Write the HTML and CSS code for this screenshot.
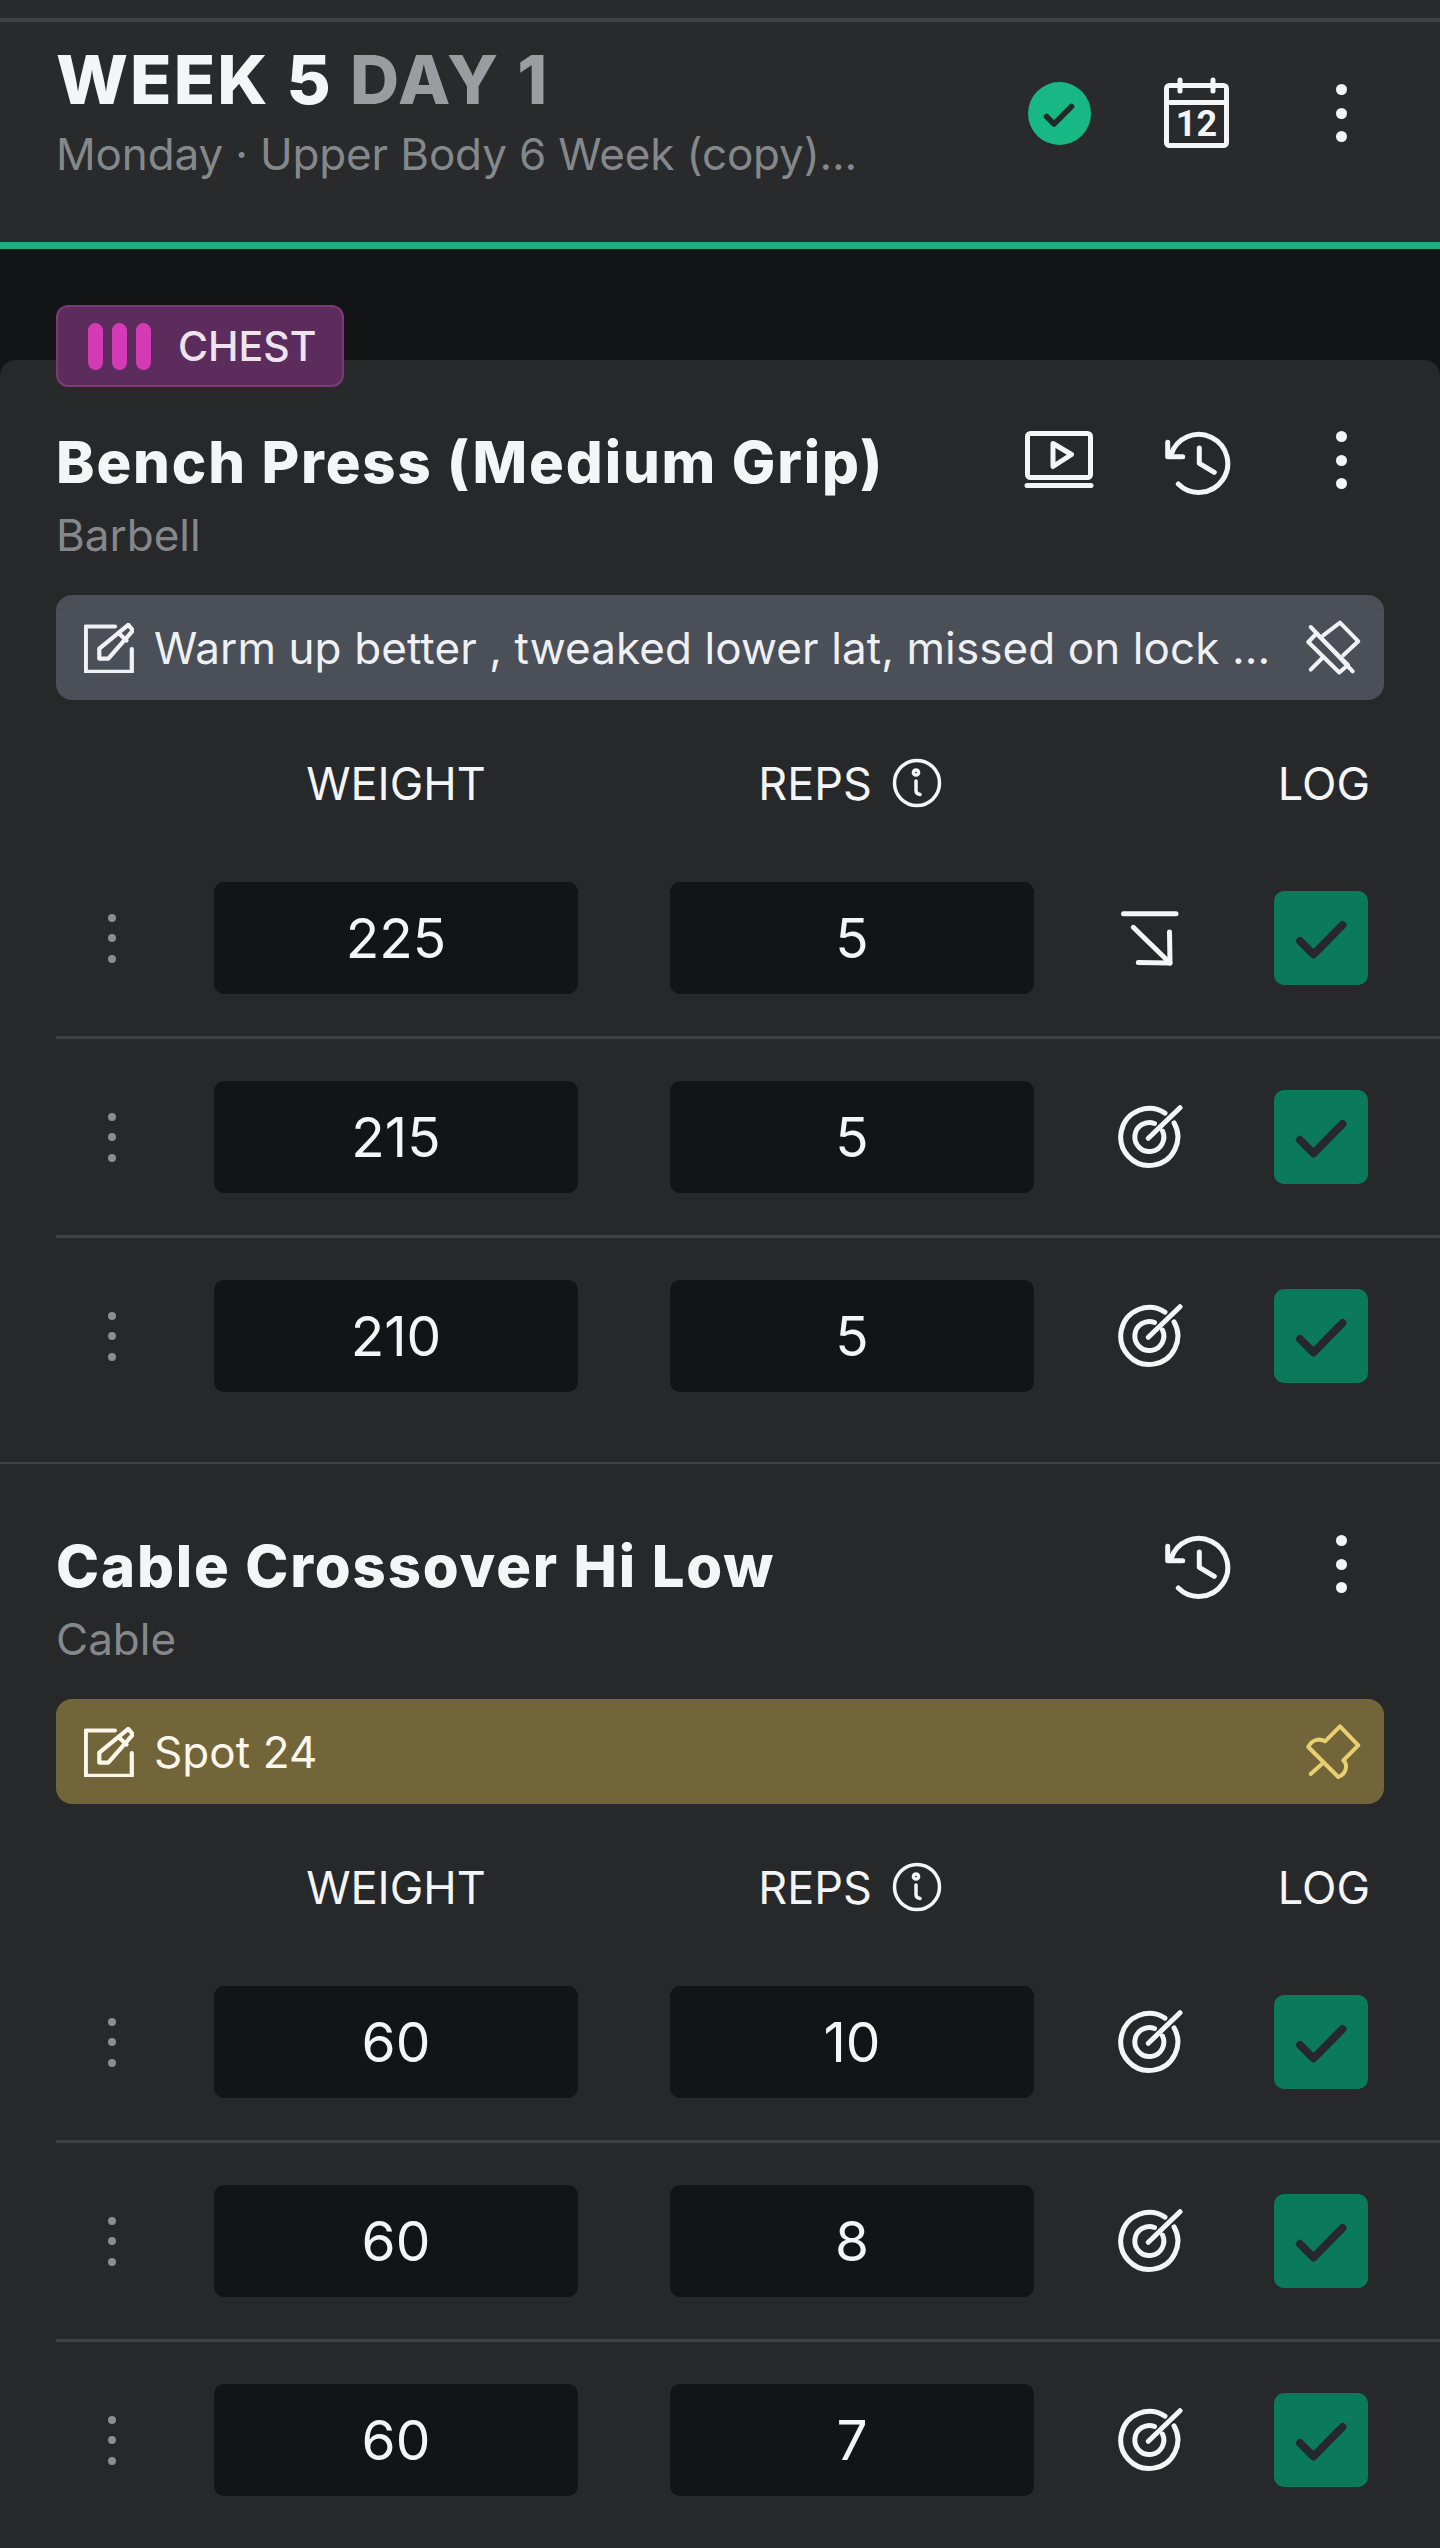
FILE: index.html

```html
<!doctype html>
<html>
<head>
<meta charset="utf-8">
<title>Workout</title>
<link rel="stylesheet" href="styles.css">
</head>

<body>
    <svg class="defs" width="0" height="0">
        <symbol id="i-edit" viewBox="0 0 50 50">
            <path d="M31 3.5H1.8V48.8H47.8V26"/>
            <path d="M15.3 35.7V25.7L44.3 1.8L49 7.5L24.3 35.7Z"/>
            <path d="M34.5 10L42.5 17.5"/>
        </symbol>
        <symbol id="i-unpin" viewBox="0 0 56 56">
            <path d="M4.7 7L46.7 51.3"/>
            <path d="M17.3 15.3L34 2.7L52.3 21.3L37.3 35.3"/>
            <path d="M2.3 22L10.5 13.5L42 45L33.3 52.5Z"/>
            <path d="M4.7 49.7L17.3 37"/>
        </symbol>
        <symbol id="i-pin" viewBox="0 0 56 56">
            <path d="M34 2.3L52.3 21.3L37.3 36.3C41.5 40 41.5 49 32.3 53L2.3 23C6 15.5 13 14 19 17.3Z"/>
            <path d="M4.7 50L17.3 38.7"/>
        </symbol>
        <symbol id="i-history" viewBox="0 0 72 72">
            <path d="M10 31A29 29 0 1 1 17.3 60"/>
            <path d="M6.7 18.3V32.7H21.7"/>
            <path d="M38.3 24V39.3L53.3 48.3"/>
        </symbol>
        <symbol id="i-target" viewBox="0 0 66 66">
            <path d="M48 9.2A28.5 28.5 0 1 0 57 18.8"/>
            <path d="M37.5 19.5A14.5 14.5 0 1 0 45.5 27"/>
            <path d="M31.3 34.3L63 3.7"/>
        </symbol>
        <symbol id="i-arrow" viewBox="0 0 66 60">
            <path d="M6.5 5.7H59"/>
            <path d="M16.3 19.3L53 55"/>
            <path d="M52.5 24L53 55L21.3 54.5"/>
        </symbol>
        <symbol id="i-info" viewBox="0 0 50 50">
            <circle cx="25" cy="25" r="22.5"/>
            <path d="M24 23V32.5Q24 36 28 36.5"/>
            <circle class="dot" cx="24" cy="14.5" r="2.6"/>
        </symbol>
        <symbol id="i-check" viewBox="0 0 94 94">
            <path d="M26 50L39.5 63.5L68.5 34"/>
        </symbol>
    </svg>

    <div class="top-line"></div>

    <div class="day-header">
        <div class="day-info">
            <h1>WEEK 5 <span>DAY 1</span></h1>
            <p>Monday · Upper Body 6 Week (copy)...</p>
        </div>
        <div class="actions">
            <div class="slot">
                <svg class="done" viewBox="0 0 63 63" width="63" height="63">
                    <circle cx="31.5" cy="31.5" r="31.5"/>
                    <path d="M18.5 34.5L26 42L43.5 24.5"/>
                </svg>
            </div>
            <div class="slot">
                <svg class="ico" viewBox="0 0 70 74" width="70" height="74">
                    <rect x="4.5" y="9.5" width="60" height="60" rx="3"/>
                    <path d="M18 4V15M51 4V15M4.5 26.5H64.5"/>
                    <text class="cal-day" x="34.5" y="60">12</text>
                </svg>
            </div>
            <div class="slot slot-last"><div class="kebab"><i></i><i></i><i></i></div></div>
        </div>
    </div>

    <div class="band">
        <div class="tag">
            <div class="tag-bars"><i></i><i></i><i></i></div>
            <span>CHEST</span>
        </div>
    </div>

    <div class="exercise first">
        <div class="ex-top">
            <h2>Bench Press (Medium Grip)</h2>
            <div class="actions">
                <div class="slot">
                    <svg class="ico" viewBox="0 0 72 62" width="72" height="62">
                        <rect x="4.5" y="4.5" width="63" height="44" rx="3"/>
                        <path d="M4 56.5H68"/>
                        <path d="M30 14.5L48.5 25.5L30 37.5Z"/>
                    </svg>
                </div>
                <div class="slot"><svg class="ico" width="72" height="72"><use href="#i-history"/></svg></div>
                <div class="slot slot-last"><div class="kebab"><i></i><i></i><i></i></div></div>
            </div>
        </div>
        <p class="equip">Barbell</p>
        <div class="note">
            <svg class="note-edit" width="50" height="50"><use href="#i-edit"/></svg>
            <span class="note-text">Warm up better , tweaked lower lat, missed on lock ...</span>
            <svg class="note-pin" width="56" height="56"><use href="#i-unpin"/></svg>
        </div>
        <div class="set-head">
            <div class="col-grip"></div>
            <div class="col-field">WEIGHT</div>
            <div class="col-field col-reps">REPS <svg class="info" width="50" height="50"><use href="#i-info"/></svg></div>
            <div class="col-goal"></div>
            <div class="col-log">LOG</div>
        </div>
        <div class="set-row">
            <div class="grip"><i></i><i></i><i></i></div>
            <div class="field">225</div>
            <div class="field">5</div>
            <div class="goal"><svg class="ico" width="66" height="60"><use href="#i-arrow"/></svg></div>
            <div class="log"><svg width="94" height="94"><use href="#i-check"/></svg></div>
        </div>
        <div class="set-row">
            <div class="grip"><i></i><i></i><i></i></div>
            <div class="field">215</div>
            <div class="field">5</div>
            <div class="goal"><svg class="ico" width="66" height="66"><use href="#i-target"/></svg></div>
            <div class="log"><svg width="94" height="94"><use href="#i-check"/></svg></div>
        </div>
        <div class="set-row">
            <div class="grip"><i></i><i></i><i></i></div>
            <div class="field">210</div>
            <div class="field">5</div>
            <div class="goal"><svg class="ico" width="66" height="66"><use href="#i-target"/></svg></div>
            <div class="log"><svg width="94" height="94"><use href="#i-check"/></svg></div>
        </div>
    </div>

    <div class="exercise">
        <div class="ex-top">
            <h2>Cable Crossover Hi Low</h2>
            <div class="actions">
                <div class="slot"><svg class="ico" width="72" height="72"><use href="#i-history"/></svg></div>
                <div class="slot slot-last"><div class="kebab"><i></i><i></i><i></i></div></div>
            </div>
        </div>
        <p class="equip">Cable</p>
        <div class="note note-yellow">
            <svg class="note-edit" width="50" height="50"><use href="#i-edit"/></svg>
            <span class="note-text">Spot 24</span>
            <svg class="note-pin" width="56" height="56"><use href="#i-pin"/></svg>
        </div>
        <div class="set-head">
            <div class="col-grip"></div>
            <div class="col-field">WEIGHT</div>
            <div class="col-field col-reps">REPS <svg class="info" width="50" height="50"><use href="#i-info"/></svg></div>
            <div class="col-goal"></div>
            <div class="col-log">LOG</div>
        </div>
        <div class="set-row">
            <div class="grip"><i></i><i></i><i></i></div>
            <div class="field">60</div>
            <div class="field">10</div>
            <div class="goal"><svg class="ico" width="66" height="66"><use href="#i-target"/></svg></div>
            <div class="log"><svg width="94" height="94"><use href="#i-check"/></svg></div>
        </div>
        <div class="set-row">
            <div class="grip"><i></i><i></i><i></i></div>
            <div class="field">60</div>
            <div class="field">8</div>
            <div class="goal"><svg class="ico" width="66" height="66"><use href="#i-target"/></svg></div>
            <div class="log"><svg width="94" height="94"><use href="#i-check"/></svg></div>
        </div>
        <div class="set-row">
            <div class="grip"><i></i><i></i><i></i></div>
            <div class="field">60</div>
            <div class="field">7</div>
            <div class="goal"><svg class="ico" width="66" height="66"><use href="#i-target"/></svg></div>
            <div class="log"><svg width="94" height="94"><use href="#i-check"/></svg></div>
        </div>
    </div>
</body>
</html>
```

FILE: styles.css

```css
*{
    padding: 0px;
    margin: 0px;
    box-sizing: border-box;
}
html, body{
    height: 100%;
    overflow: hidden;
}
body{
    background-color: #121416;
    color: #f4f5f7;
    font-family: Inter, "Liberation Sans", sans-serif;
}
.defs{
    position: absolute;
}
svg{
    display: block;
    flex: none;
}
symbol path, symbol circle{
    fill: none;
    stroke: currentColor;
    stroke-linecap: round;
    stroke-linejoin: round;
}
.ico{
    color: #f4f5f7;
    fill: none;
    stroke: #f4f5f7;
    stroke-width: 5;
    stroke-linecap: round;
    stroke-linejoin: round;
}
.ico use{
    stroke-width: 5;
}

.top-line{
    height: 22px;
    background-color: #282a2c;
    border-bottom: 4px solid #3f4143;
}
.day-header{
    display: flex;
    justify-content: space-between;
    align-items: flex-start;
    height: 227px;
    padding-left: 56px;
    padding-right: 24px;
    background-color: #282a2c;
    border-bottom: 7px solid #1cb080;
}
.day-info{
    padding-top: 22px;
}
.day-info h1{
    font-size: 68px;
    line-height: 70px;
    font-weight: 800;
    letter-spacing: 2.1px;
}
.day-info h1 span{
    color: #9a9c9f;
}
.day-info p{
    margin-top: 13px;
    font-size: 44px;
    line-height: 54px;
    letter-spacing: -0.15px;
    color: #85888b;
}
.day-header .actions{
    margin-top: 56px;
}
.actions{
    display: flex;
    align-items: center;
    height: 70px;
}
.ex-top .actions{
    margin-top: -2px;
}
.slot{
    display: flex;
    justify-content: center;
    align-items: center;
    width: 138px;
}
.slot-last{
    width: 150px;
}
.done circle{
    fill: #18b884;
}
.done path{
    fill: none;
    stroke: #1f2b2b;
    stroke-width: 5.5;
    stroke-linecap: round;
    stroke-linejoin: round;
}
.cal-day{
    fill: #f4f5f7;
    stroke: none;
    font-family: Roboto, Inter, sans-serif;
    font-size: 36px;
    font-weight: 700;
    text-anchor: middle;
}
.kebab{
    display: flex;
    flex-direction: column;
    gap: 12.5px;
}
.kebab i{
    display: block;
    width: 11px;
    height: 11px;
    border-radius: 50%;
    background-color: #f4f5f7;
}

.band{
    position: relative;
    z-index: 1;
    height: 111px;
    padding-top: 56px;
    padding-left: 56px;
}
.tag{
    display: flex;
    align-items: center;
    width: 288px;
    height: 82px;
    padding-left: 30px;
    background-color: #5c2d5c;
    border: 2px solid #7a3a78;
    border-radius: 12px;
}
.tag-bars{
    display: flex;
    gap: 9px;
    margin-right: 27px;
}
.tag-bars i{
    display: block;
    width: 15px;
    height: 47px;
    border-radius: 8px;
    background-color: #d43ab5;
}
.tag span{
    font-size: 41px;
    font-weight: 500;
    color: #eee4ee;
}

.exercise{
    border-bottom: 3px solid #3f4143;
    padding-bottom: 70px;
    background-color: #26282a;
}
.exercise.first{
    border-bottom-width: 2px;
    border-radius: 16px 16px 0px 0px;
}
.ex-top{
    display: flex;
    justify-content: space-between;
    align-items: center;
    height: 136px;
    padding-top: 66px;
    padding-left: 56px;
    padding-right: 24px;
}
.ex-top h2{
    margin-top: 1px;
    font-size: 58px;
    font-weight: 800;
    line-height: 70px;
    letter-spacing: 1.85px;
}
.equip{
    height: 50px;
    margin-top: 13px;
    margin-left: 56px;
    font-size: 44px;
    line-height: 52px;
    color: #85888b;
}
.note{
    display: flex;
    align-items: center;
    height: 105px;
    margin-top: 36px;
    margin-left: 56px;
    margin-right: 56px;
    padding-left: 28px;
    padding-right: 22px;
    border-radius: 16px;
    background-color: #4b4f57;
    color: #eef0f4;
}
.note-edit{
    color: #f0f2f6;
    stroke-width: 4.2;
}
.note-pin{
    color: #f0f2f6;
    stroke-width: 4;
}
.note-text{
    flex: 1;
    margin-left: 20px;
    font-size: 44px;
    letter-spacing: 0.1px;
    white-space: nowrap;
}
.note-yellow{
    background-color: #73653a;
    color: #fbf7ea;
}
.note-yellow .note-edit{
    color: #fbf7ea;
}
.note-yellow .note-pin{
    color: #e8cf6f;
}

.set-head{
    display: flex;
    align-items: center;
    height: 50px;
    margin-top: 58px;
    margin-bottom: 32px;
    margin-left: 56px;
    padding-right: 70px;
    font-size: 45px;
}
.col-grip{
    width: 158px;
}
.col-field{
    display: flex;
    justify-content: center;
    align-items: center;
    width: 364px;
}
.col-field + .col-field{
    margin-left: 92px;
}
.col-reps{
    padding-right: 4px;
}
.info{
    margin-left: 20px;
    color: #f4f5f7;
    stroke-width: 3.5;
}
.col-goal{
    flex: 1;
}
.col-log{
    width: 94px;
    text-align: right;
}

.set-row{
    display: flex;
    align-items: center;
    margin-left: 56px;
    padding-top: 42px;
    padding-bottom: 42px;
    padding-right: 72px;
    border-bottom: 3px solid #3f4143;
}
.set-row:last-child{
    padding-bottom: 0px;
    border-bottom: none;
}
.grip{
    display: flex;
    flex-direction: column;
    align-items: center;
    gap: 12.5px;
    width: 111px;
    margin-right: 47px;
}
.grip i{
    display: block;
    width: 8px;
    height: 8px;
    border-radius: 50%;
    background-color: #8b8d90;
}
.field{
    width: 364px;
    height: 112px;
    line-height: 112px;
    text-align: center;
    font-size: 55px;
    border-radius: 10px;
    background-color: #121416;
}
.field + .field{
    margin-left: 92px;
}
.goal{
    display: flex;
    justify-content: center;
    width: 232px;
    margin-right: 8px;
}
.log{
    width: 94px;
    height: 94px;
    border-radius: 10px;
    background-color: #0b7a5b;
    color: #26292b;
    stroke-width: 8;
}
```
